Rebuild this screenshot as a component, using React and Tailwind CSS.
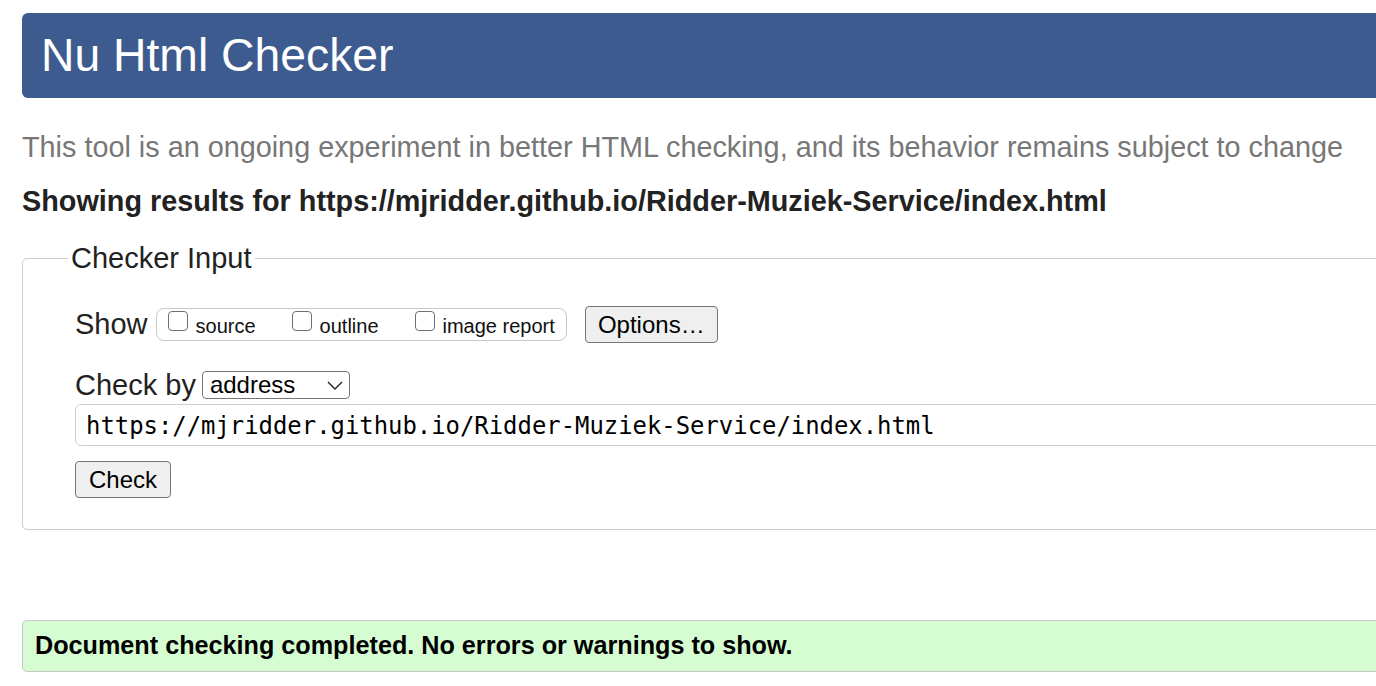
import React from 'react';

const Checkbox = ({ label }) => (
  <label className="flex items-start gap-[8px]">
    <span className="mt-[2px] block h-[20px] w-[20px] rounded-[4px] border border-[#6f6f6f] bg-white" />
    <span className="mt-[7px] text-[20px] leading-[20px] text-[#111]">{label}</span>
  </label>
);

export default function App() {
  return (
    <div className="h-[686px] w-[1376px] overflow-hidden bg-white font-['Liberation_Sans',Arial,sans-serif] text-[#222]">
      <div className="w-[1440px] pl-[22px]">
        {/* Header */}
        <header className="mt-[13px] flex h-[85px] items-center rounded-[6px] bg-[#3d5b8f] pl-[19px]">
          <h1 className="text-[46.3px] leading-none text-white">Nu Html Checker</h1>
        </header>

        <p className="mt-[32px] text-[28.8px] leading-[35px] text-[#777]">
          This tool is an ongoing experiment in better HTML checking, and its behavior remains subject to change
        </p>
        <p className="mt-[19px] text-[28.8px] font-bold leading-[35px] text-[#222]">
          Showing results for https://mjridder.github.io/Ridder-Muziek-Service/index.html
        </p>

        {/* Checker input */}
        <fieldset className="mt-[22px] rounded-[5px] border border-[#cccccc] pb-[31px] pl-[52px]">
          <legend className="-ml-[7px] px-[3px] text-[29px] leading-[35px] text-[#222]">Checker Input</legend>

          <div className="mt-[30px] flex items-center">
            <span className="text-[29px] leading-[35px] text-[#222]">Show</span>
            <div className="ml-[8px] flex h-[33px] items-start gap-[36px] rounded-[8px] border border-[#c8c8c8] pl-[11px] pr-[11px]">
              <Checkbox label="source" />
              <Checkbox label="outline" />
              <Checkbox label="image report" />
            </div>
            <button className="ml-[18px] h-[37px] w-[133px] rounded-[4px] border border-[#767676] bg-[#efefef] text-[24px] leading-none text-black">
              Options…
            </button>
          </div>

          <div className="mt-[27px] flex h-[30px] items-center">
            <span className="text-[29px] leading-[30px] text-[#222]">Check by</span>
            <div className="ml-[6px] flex h-[28px] w-[148px] items-center justify-between rounded-[4px] border border-[#767676] bg-white pl-[7px] pr-[6px]">
              <span className="text-[24px] leading-none text-black">address</span>
              <svg width="16" height="9" viewBox="0 0 16 9" fill="none" stroke="#222" strokeWidth="1.4">
                <polyline points="1,1 8,8 15,1" />
              </svg>
            </div>
          </div>

          <div className="mt-[4px] flex h-[42px] items-center rounded-[6px] border border-[#cccccc] pl-[10px] pt-[4px]">
            <span className="font-['DejaVu_Sans_Mono',monospace] text-[23.9px] leading-none text-black">
              https://mjridder.github.io/Ridder-Muziek-Service/index.html
            </span>
          </div>

          <button className="mt-[15px] h-[37px] w-[96px] rounded-[4px] border border-[#767676] bg-[#efefef] text-[24px] leading-none text-black">
            Check
          </button>
        </fieldset>

        {/* Result */}
        <div className="mt-[90px] flex h-[52px] items-center rounded-[5px] border border-[#c8c8c8] bg-[#d6fcd2] pl-[12px]">
          <p className="text-[25.2px] font-bold leading-none text-black">
            Document checking completed. No errors or warnings to show.
          </p>
        </div>
      </div>
    </div>
  );
}
